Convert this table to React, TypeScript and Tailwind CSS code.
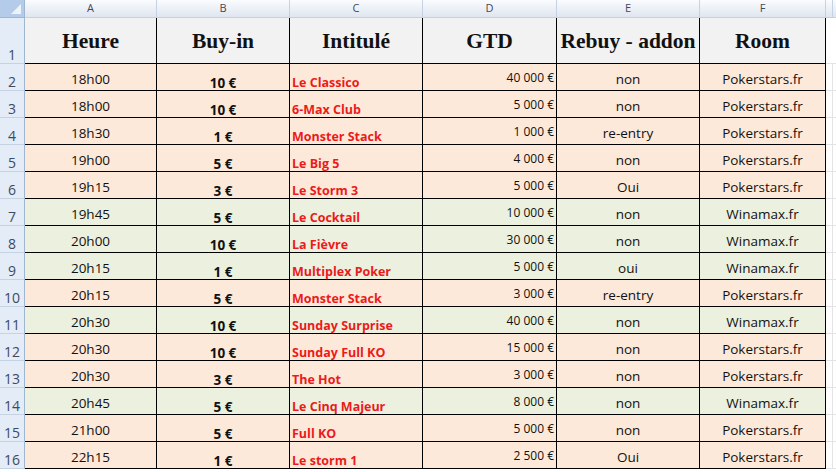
import React from "react";

type Row = { h: string; b: string; t: string; g: string; r: string; room: string; green: boolean };

const rows: Row[] = [
  { h: "18h00", b: "10 €", t: "Le Classico", g: "40 000 €", r: "non", room: "Pokerstars.fr", green: false },
  { h: "18h00", b: "10 €", t: "6-Max Club", g: "5 000 €", r: "non", room: "Pokerstars.fr", green: false },
  { h: "18h30", b: "1 €", t: "Monster Stack", g: "1 000 €", r: "re-entry", room: "Pokerstars.fr", green: false },
  { h: "19h00", b: "5 €", t: "Le Big 5", g: "4 000 €", r: "non", room: "Pokerstars.fr", green: false },
  { h: "19h15", b: "3 €", t: "Le Storm 3", g: "5 000 €", r: "Oui", room: "Pokerstars.fr", green: false },
  { h: "19h45", b: "5 €", t: "Le Cocktail", g: "10 000 €", r: "non", room: "Winamax.fr", green: true },
  { h: "20h00", b: "10 €", t: "La Fièvre", g: "30 000 €", r: "non", room: "Winamax.fr", green: true },
  { h: "20h15", b: "1 €", t: "Multiplex Poker", g: "5 000 €", r: "oui", room: "Winamax.fr", green: true },
  { h: "20h15", b: "5 €", t: "Monster Stack", g: "3 000 €", r: "re-entry", room: "Pokerstars.fr", green: false },
  { h: "20h30", b: "10 €", t: "Sunday Surprise", g: "40 000 €", r: "non", room: "Winamax.fr", green: true },
  { h: "20h30", b: "10 €", t: "Sunday Full KO", g: "15 000 €", r: "non", room: "Pokerstars.fr", green: false },
  { h: "20h30", b: "3 €", t: "The Hot", g: "3 000 €", r: "non", room: "Pokerstars.fr", green: false },
  { h: "20h45", b: "5 €", t: "Le Cinq Majeur", g: "8 000 €", r: "non", room: "Winamax.fr", green: true },
  { h: "21h00", b: "5 €", t: "Full KO", g: "5 000 €", r: "non", room: "Pokerstars.fr", green: false },
  { h: "22h15", b: "1 €", t: "Le storm 1", g: "2 500 €", r: "Oui", room: "Pokerstars.fr", green: false },
];

const widths = ["w-[132px]", "w-[133px]", "w-[133px]", "w-[134px]", "w-[143px]", "w-[126px]"];
const letters = ["A", "B", "C", "D", "E", "F"];
const heads = ["Heure", "Buy-in", "Intitulé", "GTD", "Rebuy - addon", "Room"];

const cellFont = { fontFamily: '"Open Sans", "Noto Sans", sans-serif' };

export default function App() {
  return (
    <div className="w-[836px] h-[472px] bg-white overflow-hidden text-[#111]" style={cellFont}>
      {/* Column letters */}
      <div className="flex h-[18px]">
        <div className="relative w-[25px] shrink-0 bg-[#b4cbe9] border-r border-b border-[#9eb6ce]">
          <div
            className="absolute right-[3px] bottom-[3px] w-[10px] h-[10px] bg-[#eef3fa]"
            style={{ clipPath: "polygon(100% 0, 100% 100%, 0 100%)" }}
          />
        </div>
        {letters.map((l, i) => (
          <div
            key={l}
            className={`${widths[i]} shrink-0 flex items-center justify-center text-[11px] text-[#3f4a5a] bg-gradient-to-b from-[#fafcfe] to-[#dfe6f0] border-r border-b border-[#c5d2e3]`}
          >
            {l}
          </div>
        ))}
        <div className="w-[7px] shrink-0 bg-gradient-to-b from-[#fafcfe] to-[#dfe6f0] border-r border-b border-[#c5d2e3]" />
        <div className="flex-1 bg-gradient-to-b from-[#fafcfe] to-[#dfe6f0] border-b border-[#c5d2e3]" />
      </div>

      {/* Row 1 header */}
      <div className="flex h-[46px]">
        <div className="w-[25px] shrink-0 bg-[#e4ecf7] border-r border-r-[#9eb6ce] border-b border-b-[#c5d2e3] flex items-end justify-center pb-[1px] text-[14px] leading-[14px] text-[#3b4b63]">
          1
        </div>
        {heads.map((h, i) => (
          <div
            key={h}
            className={`${widths[i]} shrink-0 bg-[#f2f2f2] border-r border-b border-black flex items-center justify-center pt-[2px] text-[21.5px] font-bold`}
            style={{ fontFamily: '"Liberation Serif", "DejaVu Serif", serif' }}
          >
            {h}
          </div>
        ))}
        <div className="flex-1 border-b border-[#e3e3e3]" />
      </div>

      {/* Data rows */}
      {rows.map((r, idx) => {
        const bg = r.green ? "bg-[#ebf1de]" : "bg-[#fde9d9]";
        const base = `shrink-0 border-r border-b border-black ${bg} flex items-end leading-[14px]`;
        return (
          <div key={idx} className="flex h-[27px]">
            <div className="w-[25px] shrink-0 bg-[#e4ecf7] border-r border-r-[#9eb6ce] border-b border-b-[#c5d2e3] flex items-end justify-center pb-[1px] text-[14px] leading-[14px] text-[#3b4b63]">
              {idx + 2}
            </div>
            <div className={`${widths[0]} ${base} justify-center pb-[4px] text-[13.5px]`}>{r.h}</div>
            <div className={`${widths[1]} ${base} justify-center pb-0 text-[13.5px] font-bold`}>{r.b}</div>
            <div className={`${widths[2]} ${base} justify-start pl-[2px] pb-0 text-[12.5px] font-bold text-[#ec1a1a]`}>{r.t}</div>
            <div className={`${widths[3]} ${base} justify-end pr-[2px] pb-[5px] text-[12px]`}>{r.g}</div>
            <div className={`${widths[4]} ${base} justify-center pb-[4px] text-[13.5px]`}>{r.r}</div>
            <div className={`${widths[5]} ${base} justify-center pb-[4px] text-[13.5px]`}>{r.room}</div>
            <div className="w-[7px] shrink-0 border-r border-b border-[#e3e3e3]" />
            <div className="flex-1 border-b border-[#e3e3e3]" />
          </div>
        );
      })}
    </div>
  );
}
